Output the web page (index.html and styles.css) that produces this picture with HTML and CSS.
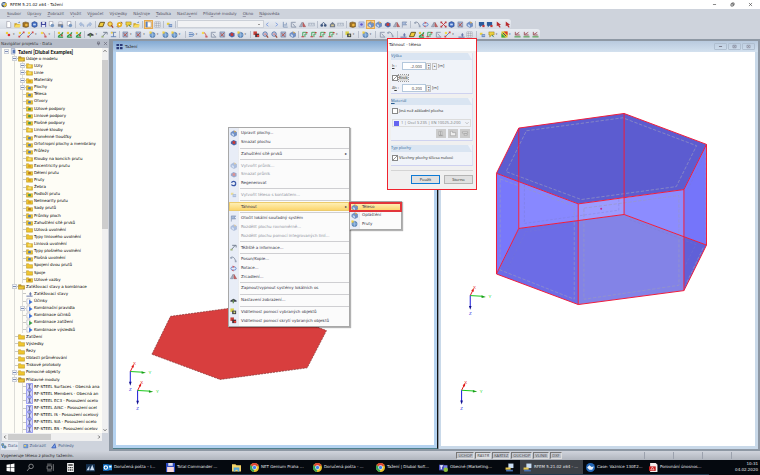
FILE: index.html
```html
<!DOCTYPE html>
<html lang="cs">
<head>
  <meta charset="UTF-8">
  <meta name="viewport" content="width=device-width, initial-scale=1.0">
  <title>RFEM 5.21.02 x64 - Tažení</title>
  <link rel="stylesheet" href="styles.css">
</head>
<body>
  <header class="titlebar">
    <svg class="icon" viewBox="0 0 16 16"><circle cx="7" cy="8" r="6" fill="#3d5570"/><path d="M4 9l6-5 4 4-5 6z" fill="#e8c23c"/><path d="M3 5h6v4H3z" fill="#9fc0e8"/></svg>
    <h1 class="titlebar__text">RFEM 5.21.02 x64 - Tažení</h1>
    <div class="titlebar__buttons">
      <button aria-label="Minimalizovat"><svg class="icon" viewBox="0 0 16 16"><path d="M3 8h10" stroke="#444" stroke-width="2"/></svg></button>
      <button aria-label="Obnovit"><svg class="icon" viewBox="0 0 16 16"><path d="M3 6h7v7H3zM6 6V3h7v7h-3" fill="none" stroke="#333" stroke-width="2"/></svg></button>
      <button aria-label="Zavřít"><svg class="icon" viewBox="0 0 16 16"><path d="M3 3l10 10M13 3L3 13" stroke="#444" stroke-width="2"/></svg></button>
    </div>
  </header>

  <nav class="menubar">
    <a href="#"><u>S</u>oubor</a>
    <a href="#">Úpr<u>a</u>vy</a>
    <a href="#"><u>Z</u>obrazit</a>
    <a href="#">V<u>l</u>ožit</a>
    <a href="#">V<u>ý</u>počet</a>
    <a href="#">Výsl<u>e</u>dky</a>
    <a href="#">Ná<u>s</u>troje</a>
    <a href="#"><u>T</u>abulka</a>
    <a href="#">Nasta<u>v</u>ení</a>
    <a href="#">Příd<u>a</u>vné moduly</a>
    <a href="#"><u>O</u>kno</a>
    <a href="#"><u>N</u>ápověda</a>
  </nav>

  <div class="toolbars">
    <div class="toolbar toolbar--main" id="toolbar_main"></div>
    <div class="toolbar toolbar--model" id="toolbar_model"></div>
  </div>

  <main class="workspace">
    <aside class="navigator">
      <div class="navigator__header">
        <span>Navigátor projektu - Data</span>
        <svg class="icon" viewBox="0 0 16 16"><path d="M5 3h6v6H5zM3 9h10M8 9v5" fill="none" stroke="#667" stroke-width="2"/></svg>
        <svg class="icon" viewBox="0 0 16 16"><path d="M3 3l10 10M13 3L3 13" stroke="#667" stroke-width="2"/></svg>
      </div>
      <div class="navigator__body">
        <ul class="tree" id="tree"></ul>
        <div class="scroll scroll--vertical">
          <svg viewBox="0 0 16 16"><path d="M4 10l4-4 4 4" fill="none" stroke="#444" stroke-width="2"/></svg>
          <div class="scroll__thumb"></div>
          <svg viewBox="0 0 16 16"><path d="M4 6l4 4 4-4" fill="none" stroke="#444" stroke-width="2"/></svg>
        </div>
      </div>
      <div class="scroll scroll--horizontal">
        <svg viewBox="0 0 16 16"><path d="M10 4L6 8l4 4" fill="none" stroke="#444" stroke-width="2"/></svg>
        <div class="scroll__thumb"></div>
        <svg viewBox="0 0 16 16"><path d="M6 4l4 4-4 4" fill="none" stroke="#444" stroke-width="2"/></svg>
      </div>
      <div class="navigator__tabs">
        <button class="tab tab--active"><svg class="icon" viewBox="0 0 16 16"><path d="M2 2h5v5H2zM8 8h5v5H8z" fill="#e8c23c" stroke="#2a6fc0" stroke-width="2"/><path d="M4 8v4h3" fill="none" stroke="#2a6fc0" stroke-width="2"/></svg>Data</button>
        <button class="tab"><svg class="icon" viewBox="0 0 16 16"><path d="M2 4h11v9H2z" fill="#6f9ede" stroke="#35559c"/><path d="M3 5h5v4H3z" fill="#f0d060"/></svg>Zobrazit</button>
        <button class="tab"><svg class="icon" viewBox="0 0 16 16"><path d="M2 13L10 2l3 11z" fill="#7fa4e8" stroke="#2b50b0" stroke-width="2"/></svg>Pohledy</button>
      </div>
    </aside>

    <div class="mdi">
      <section class="view view--active">
        <div class="view__title">
          <svg class="icon" viewBox="0 0 16 16"><path d="M1 2h6v5H1zM9 2h6v5H9zM1 9h6v5H1zM9 9h6v5H9z" fill="#2b3a78"/></svg>
          <span>Tažení</span>
        </div>
        <svg class="view__canvas" viewBox="18 -834 954 1182" preserveAspectRatio="xMinYMin meet">
          <defs>
            <g id="axes" font-family="Liberation Sans" font-size="13">
              <path d="M0 0L8-16" stroke="#e01818" stroke-width="3"/><path d="M11-22l-1 11-7-4z" fill="#e01818"/>
              <path d="M0 0l36 2" stroke="#18c818" stroke-width="3"/><path d="M47 4l-13 3v-8z" fill="#18a018"/>
              <path d="M0 0v34" stroke="#1818d8" stroke-width="3"/><path d="M0 43l-4-12h8z" fill="#101090"/>
              <text x="8" y="-19" fill="#e01818">X</text>
              <text x="55" y="8" fill="#18d818">Y</text>
              <text x="-4" y="59" fill="#1818e0">Z</text>
            </g>
          </defs>
          <path d="M126 75L182-39 446-75 651 4 593 116 331 151z" fill="#d83e3e" stroke="#803030" stroke-width="2" stroke-dasharray="6 3"/>
          <use href="#axes" x="61" y="127"/>
          <use href="#axes" x="83" y="184"/>
        </svg>
      </section>

      <section class="view">
        <div class="view__title">
          <div class="view__buttons">
            <button aria-label="Minimalizovat"><svg viewBox="0 0 16 16"><path d="M3 8h10" stroke="#778" stroke-width="3"/></svg></button>
            <button aria-label="Maximalizovat"><svg viewBox="0 0 16 16"><path d="M3 4h10v8H3zM6 8h4" fill="none" stroke="#778" stroke-width="2"/></svg></button>
            <button aria-label="Zavřít"><svg viewBox="0 0 16 16"><path d="M3 4h10v8H3zM5 5l6 6M11 5l-6 6" fill="none" stroke="#889" stroke-width="2"/></svg></button>
          </div>
        </div>
        <svg class="view__canvas" viewBox="33 -114 945 1182" preserveAspectRatio="xMinYMin meet">
          <!-- walls -->
          <path d="M200 251l67 24v142l-67 137z" fill="#7878fb"/>
          <path d="M267 275l179 68v50l-179 24z" fill="#8888ff"/>
          <path d="M446 343l138-18v50l-138 18z" fill="#9c9cff"/>
          <path d="M584 325l180-25v141l-180-66z" fill="#8c8cff"/>
          <path d="M764 300l68-136v303l-68-26z" fill="#7575fa"/>
          <!-- base -->
          <path d="M200 554l67-137 179-24v253z" fill="#6c6ce6"/>
          <path d="M446 393l138-18 180 66v163l-318 42z" fill="#8383e7"/>
          <path d="M764 441l68 26-68 137z" fill="#6060d8"/>
          <!-- top face -->
          <path d="M267 115l317-44 248 93-68 136-318 43-246-92z" fill="#5c5cd0"/>
          <g fill="none" stroke="#9898c0" stroke-width="2" stroke-dasharray="10 5">
            <path d="M290 123l290-39 222 84-61 123-286 39-226-84z"/>
            <path d="M211 268l223 82v280l-223-88z"/>
            <path d="M463 356l286-38v270l-286 42z"/>
            <path d="M830 180v278M822 475l-52 110"/>
          </g>
          <g fill="none" stroke="#7878cc" stroke-width="1" stroke-dasharray="8 5">
            <path d="M284 285v117l284-40v-34M230 545l58-118 150-20M600 390l200 75-30 60M775 300l50-100"/>
          </g>
          <g fill="none" stroke="#f01c3c" stroke-width="3">
            <path d="M267 115l317-44 248 93-68 136-318 43-246-92z"/>
            <path d="M267 417l317-42 248 92-68 137-318 42-246-92z"/>
            <path d="M267 115v302M584 71v304M446 343v303M200 251v303M764 300v304M832 164v303"/>
          </g>
          <circle cx="515" cy="358" r="3" fill="#c02890"/>
          <use href="#axes" x="121" y="619"/>
          <use href="#axes" x="95" y="904"/>
        </svg>
      </section>
    </div>
  </main>

  <footer class="statusbar">
    <span class="statusbar__hint">Vygeneruje těleso z plochy tažením.</span>
    <div class="statusbar__modes">
      <button>UCHOP</button><button class="on">RASTR</button><button>KARTEZ</button><button>OUCHOP</button><button>VLINIE</button><button>DXF</button>
    </div>
    <div class="statusbar__panes"><i></i><i></i><i></i><i></i></div>
  </footer>

  <nav class="taskbar" id="taskbar"></nav>

  <ul class="menu" id="context_menu"></ul>
  <ul class="menu menu--sub" id="sub_menu"></ul>

  <form class="dialog">
    <h2 class="dialog__title">Táhnout - těleso</h2>
    <div class="dialog__body">
      <fieldset class="group group--height">
        <legend>Výška</legend>
        <div class="field">
          <label for="height"><u>h</u> :</label>
          <input id="height" type="text" value="-2.000">
          <button type="button" class="spin" aria-label="Krok">▴<br>▾</button>
          <button type="button" class="spin" aria-label="Více">▸</button>
          <span>[m]</span>
        </div>
        <label class="check check--focus"><input type="checkbox" checked><span>Krok</span></label>
        <div class="field">
          <label for="step">Δ<u>h</u> :</label>
          <input id="step" type="text" value="0.200">
          <button type="button" class="spin" aria-label="Krok">▴<br>▾</button>
          <span>[m]</span>
        </div>
      </fieldset>
      <fieldset class="group group--material">
        <legend><u>M</u>ateriál</legend>
        <label class="check"><input type="checkbox"><span>Jiná než základní plocha</span></label>
        <div class="material">
          <i class="material__swatch"></i>
          <select aria-label="Materiál" disabled><option>1 | Ocel S 235 | EN 10025-2:200</option></select>
          <svg viewBox="0 0 16 16"><path d="M4 6l4 4 4-4" fill="none" stroke="#aaa" stroke-width="2"/></svg>
        </div>
        <div class="material__tools">
          <button type="button" aria-label="Knihovna"><svg viewBox="0 0 16 16"><path d="M3 3h3v9H3zM7 3h3v9H7zM3 13h10" fill="#eee" stroke="#888"/></svg></button>
          <button type="button" aria-label="Nový"><svg viewBox="0 0 16 16"><path d="M2 3h5v3h7v7H2z" fill="#eee" stroke="#888"/></svg></button>
          <button type="button" aria-label="Upravit"><svg viewBox="0 0 16 16"><path d="M2 4h12v3H2zM6 9h7v3H6z" fill="#eee" stroke="#888"/></svg></button>
        </div>
      </fieldset>
      <fieldset class="group group--type">
        <legend>Typ plochy</legend>
        <label class="check"><input type="checkbox" checked><span>Všechny plochy tělesa nulové</span></label>
      </fieldset>
      <div class="dialog__actions">
        <button type="submit" class="primary">Použít</button>
        <button type="button">Storno</button>
      </div>
    </div>
  </form>

  <script src="app.js"></script>
</body>
</html>
```
FILE: styles.css
```css
* {
  box-sizing: border-box;
}

body {
  margin: 0;
  height: 100vh;
  display: flex;
  flex-direction: column;
  overflow: hidden;
  font-family: "DejaVu Sans", sans-serif;
  font-size: 4px;
  line-height: 6px;
  color: #222;
  background: #ced3dc;
}

button,
input,
select {
  font: inherit;
  color: inherit;
  margin: 0;
  padding: 0;
  border: 0;
  background: none;
  border-radius: 0;
}

ul {
  list-style: none;
  margin: 0;
  padding: 0;
}

a {
  color: inherit;
  text-decoration: none;
}

svg {
  display: block;
}

.icon {
  width: 7px;
  height: 7px;
  flex: none;
}

/* Title and menu */
.titlebar {
  height: 9px;
  flex: none;
  display: flex;
  align-items: center;
  gap: 2px;
  padding: 0 7px 0 1px;
  background: #fff;
}

.titlebar__text {
  flex: 1;
  margin: 0;
  font-size: 4px;
  font-weight: 400;
  color: #111;
}

.titlebar__buttons {
  display: flex;
  gap: 13px;
}

.titlebar__buttons .icon {
  width: 5px;
  height: 5px;
}

.menubar {
  height: 10px;
  flex: none;
  display: flex;
  align-items: center;
  gap: 6px;
  padding-left: 7px;
  color: #556;
}

.menubar u {
  text-decoration-color: #99a;
}

/* Toolbars */
.toolbars {
  flex: none;
}

.toolbar {
  height: 10px;
  display: flex;
  align-items: center;
  padding-left: 4px;
  background: linear-gradient(#e9edf3, #d6dbe4);
  border-radius: 0 3px 3px 0;
}

.toolbar--main {
  width: 67.3%;
}

.toolbar--model {
  width: 71%;
}

.tool {
  flex: 10 1 0;
  height: 9px;
  min-width: 0;
  display: flex;
  align-items: center;
  justify-content: center;
}

.tool svg {
  width: 7px;
  height: 7px;
}

.tool--on {
  background: #fbd28b;
  outline: 1px solid #e5a850;
  outline-offset: -1px;
}

.toolbar__sep {
  flex: 4 1 0;
  height: 7px;
  background: linear-gradient(#b8bfcc, #b8bfcc) center / 1px 100% no-repeat;
}

.toolbar__drop {
  flex: 5 1 0;
  min-width: 0;
  font-size: 3px;
  line-height: 8px;
  color: #555;
}

.toolbar__combo {
  flex: 97 1 0;
  height: 8px;
  min-width: 0;
  appearance: none;
  background: linear-gradient(#999, #999) 97% 50% / 2px 1px no-repeat #f1f2f4;
  border: 1px solid #cbd0d8;
}

/* Workspace */
.workspace {
  flex: 1;
  min-height: 0;
  display: flex;
}

.navigator {
  width: 109px;
  flex: none;
  display: flex;
  flex-direction: column;
  background: #ced3dc;
}

.navigator__header {
  height: 9px;
  flex: none;
  display: flex;
  align-items: center;
  gap: 2px;
  padding: 0 1px;
  color: #333;
  background: #b7bdc9;
}

.navigator__header span {
  flex: 1;
}

.navigator__header .icon {
  width: 5px;
  height: 5px;
}

.navigator__body {
  flex: 1;
  min-height: 0;
  display: flex;
  margin: 0 1px 0 2px;
  background: #fefdf6;
}

.tree {
  flex: 1;
  min-width: 0;
  overflow: hidden;
  display: grid;
  grid-auto-rows: minmax(0, 1fr);
  color: #000;
}

.tree__row {
  display: flex;
  align-items: center;
  white-space: nowrap;
}

.tree__row--root {
  font-family: Lato, sans-serif;
  font-size: 5px;
  font-weight: 700;
}

.tree__row .icon {
  margin-right: 1px;
}

.tree__cell {
  width: 8px;
  flex: none;
  align-self: stretch;
  display: flex;
  align-items: center;
  justify-content: center;
}

.tree__cell--line {
  background: linear-gradient(#dcdcd8, #dcdcd8) 4px 0 / 1px 100% no-repeat;
}

.tree__cell--node {
  background:
    linear-gradient(#dcdcd8, #dcdcd8) 4px 0 / 1px 100% no-repeat,
    linear-gradient(#c8c8c4, #c8c8c4) 4px 50% / 4px 1px no-repeat;
}

.tree__toggle {
  width: 5px;
  height: 5px;
  background: linear-gradient(#7c8cb4, #7c8cb4) center / 3px 1px no-repeat #f4f6fa;
  border: 1px solid #ccd0d8;
}

.scroll {
  display: flex;
  flex: none;
  background: #f0f0f0;
}

.scroll svg {
  width: 6px;
  height: 6px;
  flex: none;
}

.scroll--vertical {
  width: 6px;
  flex-direction: column;
}

.scroll--vertical .scroll__thumb {
  height: 44%;
  margin-top: 6px;
  background: #cdcdcd;
}

.scroll--vertical svg:last-child {
  margin-top: auto;
}

.scroll--horizontal {
  height: 8px;
  margin: 0 7px 0 2px;
  align-items: center;
}

.scroll--horizontal .scroll__thumb {
  width: 43%;
  height: 6px;
  background: #cdcdcd;
}

.scroll--horizontal svg:last-child {
  margin-left: auto;
}

.navigator__tabs {
  height: 10px;
  flex: none;
  display: flex;
  align-items: center;
  gap: 5px;
  padding-left: 1px;
  color: #4a6088;
}

.tab {
  display: flex;
  align-items: center;
  gap: 1px;
  height: 8px;
}

.tab .icon {
  width: 6px;
  height: 6px;
}

.tab--active {
  background: #e4e8ef;
}

/* Model windows */
.mdi {
  flex: 1;
  min-width: 0;
  display: flex;
  gap: 1px;
  padding: 2px 2px 2px 4px;
  background: #8e98a4;
}

.view {
  flex: 320 1 0;
  min-width: 0;
  display: flex;
  flex-direction: column;
  padding: 0 3px 3px 2px;
  background: #c9d9e9;
}

.view--active {
  flex-grow: 324;
  padding-left: 3px;
  background: #b4d2f0;
  border-right: 1px solid #111;
  border-bottom: 1px solid #4d7f8c;
}

.view__title {
  height: 11px;
  flex: none;
  display: flex;
  align-items: center;
  gap: 2px;
  margin: 0 -3px;
  padding: 0 3px;
  background: linear-gradient(#b9cade, #d3e1ef);
}

.view--active .view__title {
  background: linear-gradient(#84a9d2, #b6d0ea);
}

.view__canvas {
  flex: 1;
  min-height: 0;
  width: 100%;
  background: #fff;
}

.view__buttons {
  margin-left: auto;
  display: flex;
  gap: 1px;
}

.view__buttons button {
  width: 13px;
  height: 7px;
  display: flex;
  align-items: center;
  justify-content: center;
  border: 1px solid #b0bfd0;
  border-radius: 1px;
}

.view__buttons svg {
  width: 5px;
  height: 5px;
}

/* Status bar */
.statusbar {
  height: 9px;
  flex: none;
  display: flex;
  align-items: center;
  padding-left: 1px;
  background: linear-gradient(#d0d4dc, #b0b5be);
}

.statusbar__hint {
  width: 60%;
}

.statusbar__modes {
  display: flex;
  gap: 1px;
  font-family: "Open Sans", sans-serif;
  font-size: 4px;
  color: #444;
}

.statusbar__modes button {
  height: 7px;
  padding: 0 1px;
  border: 1px solid;
  border-color: #777 #ddd #ddd #777;
  line-height: 5px;
}

.statusbar__modes .on {
  background: #d8dbe0;
}

.statusbar__panes {
  flex: 1;
  display: flex;
  justify-content: flex-end;
}

.statusbar__panes i {
  width: 29px;
  height: 7px;
  border-left: 1px solid #9ba1ad;
}

/* Windows task bar */
.taskbar {
  height: 15px;
  flex: none;
  display: flex;
  color: #e4e6e8;
  background: #05090f;
}

.app {
  width: 63px;
  flex: none;
  display: flex;
  align-items: center;
  gap: 2px;
  padding-left: 3px;
  white-space: nowrap;
  border-bottom: 1px solid #20394d;
}

.app svg {
  width: 9px;
  height: 9px;
  flex: none;
}

.app--pinned {
  width: 20px;
  padding: 0;
  justify-content: center;
  border-bottom: 0;
}

.app--running {
  width: 21px;
  padding: 0;
  justify-content: center;
}

.app--active {
  background: #3c4046;
}

.clock {
  margin-left: auto;
  padding: 1px 2px 0 0;
  text-align: right;
}

/* Menus lie over the model windows */
.menu {
  position: absolute;
  left: 228px;
  top: 127px;
  width: 122px;
  height: 200px;
  padding: 1px 0;
  display: flex;
  flex-direction: column;
  border: 1px solid #a8a8a8;
  color: #334;
  background: linear-gradient(90deg, #e8edf7 9px, #d8dce4 9px, #fbfbfb 10px);
  box-shadow: 1px 1px 1px rgba(0, 0, 0, .3);
}

.menu__item {
  flex: 3 1 0;
  min-height: 0;
}

.menu__item button {
  width: 100%;
  height: 100%;
  display: flex;
  align-items: center;
  gap: 4px;
  padding: 0 2px 0 1px;
  text-align: left;
  white-space: nowrap;
}

.menu__item span {
  flex: 1;
}

.menu__item button:disabled {
  color: #9094a0;
}

.menu__item button:disabled svg {
  opacity: .5;
}

.menu__item--open {
  background: linear-gradient(#fff2bd, #fbd264);
  outline: 1px solid #eccb6c;
  outline-offset: -1px;
}

.menu__sep {
  flex: 1 1 0;
  margin-left: 11px;
  background: linear-gradient(#cfcfd2, #cfcfd2) center / 100% 1px no-repeat;
}

.menu--sub {
  left: 349px;
  top: 201px;
  width: 53px;
  height: 29px;
}

.menu--sub .menu__item--open {
  outline: 2px solid #e2353a;
}

/* Dialog */
.dialog {
  position: absolute;
  left: 387px;
  top: 38px;
  width: 90px;
  font-family: "Open Sans", sans-serif;
  font-size: 4px;
  border: 1px solid #f0232e;
  background: #f0f0f0;
}

.dialog__title {
  height: 12px;
  margin: 0;
  padding-left: 1px;
  font-family: "DejaVu Sans", sans-serif;
  font-size: 4px;
  font-weight: 400;
  line-height: 11px;
  background: #fff;
}

.dialog__body {
  padding: 2px 3px 5px;
}

.group {
  margin: 0 0 4px;
  padding: 0 1px;
  min-width: 0;
  border: 0;
  border-bottom: 1px solid #cfd2f0;
  border-right: 1px solid #dcdff4;
  background: #f0f3f9;
}

.group legend {
  float: left;
  width: calc(100% + 2px);
  height: 7px;
  margin: 0 -1px 2px;
  padding: 0;
  color: #2d5f94;
  background: #dae5f2;
  clip-path: polygon(0 0, 95% 0, 100% 100%, 0 100%);
}

.group > :not(legend) {
  clear: both;
}

.group--height {
  height: 41px;
}

.group--material {
  height: 43px;
}

.group--type {
  height: 21px;
}

.field {
  height: 8px;
  display: flex;
  align-items: center;
  color: #333;
}

.field label {
  width: 10px;
}

.field input {
  width: 24px;
  height: 8px;
  padding-right: 3px;
  text-align: right;
  background: #fff;
  border: 1px solid #b4c8dc;
}

.spin {
  width: 5px;
  height: 7px;
  margin-right: 1px;
  font-size: 3px;
  line-height: 3px;
  text-align: center;
  border: 1px solid #c4c4c4;
}

.check {
  height: 8px;
  display: flex;
  align-items: center;
  gap: 1px;
}

.group--height .check {
  margin: 4px 0 2px;
}

.check input {
  appearance: none;
  width: 6px;
  height: 6px;
  background: #fff;
  border: 1px solid #888;
}

.check input:checked {
  background: linear-gradient(135deg, #fff 50%, #999 50%, #999 60%, #fff 60%);
}

.check--focus span {
  background: #dcdcdc;
  outline: 1px dotted #999;
}

.material {
  height: 8px;
  display: flex;
  align-items: center;
  gap: 2px;
  margin: 4px 0 2px;
  color: #777;
  border: 1px solid #dcdcdc;
}

.material__swatch {
  width: 5px;
  height: 5px;
  margin-left: 1px;
  background: #6464f0;
}

.material select {
  flex: 1;
  min-width: 0;
  appearance: none;
  opacity: 1;
}

.material svg {
  width: 6px;
  height: 6px;
}

.material__tools {
  display: flex;
  justify-content: flex-end;
  gap: 2px;
  padding-right: 1px;
}

.material__tools button {
  width: 10px;
  height: 9px;
  padding: 1px;
  background: #ccc;
}

.material__tools svg {
  width: 8px;
  height: 7px;
}

.dialog__actions {
  display: flex;
  justify-content: flex-end;
  gap: 4px;
  padding-top: 4px;
  border-top: 1px solid #d4d4d4;
}

.dialog__actions button {
  width: 29px;
  height: 9px;
  line-height: 6px;
  border: 1px solid #b4b4b4;
  background: #e1e1e1;
}

.dialog__actions .primary {
  border-color: #0f7ad4;
}
```
FILE: app.js
```js
const glyphs = {
  doc: '<path d="M4 1h6l3 3v11H4z" fill="#fff" stroke="#778"/>',
  folder: '<path d="M1 4h5l2 2h7v8H1z" fill="#efc52e" stroke="#a8861c"/>',
  open: '<path d="M1 4h6l1 2h7v8H1z" fill="#c89c20" stroke="#907010"/><path d="M3 8h11l-2 5H1z" fill="#e8c438"/>',
  openFile: '<path d="M1 5h5l2 2h5v7H1z" fill="#c89c20"/><path d="M4 8h12l-3 6H1z" fill="#f8dc60"/><path d="M9 4l4-3v3z" fill="#2a60b0"/>',
  book: '<path d="M2 4l6-2 7 2v9l-6 2-7-2z" fill="#a07428" stroke="#5c4010"/><circle cx="10" cy="9" r="3" fill="#f0b840"/>',
  cube: '<path d="M2 4l6-3 6 3v8l-6 3-6-3z" fill="#3c68c0" stroke="#203870"/><path d="M5 6h6v4H5z" fill="#c8daf4"/>',
  save: '<path d="M2 2h12v12H2z" fill="#40489c"/><path d="M5 2h6v5H5zM4 9h8v5H4z" fill="#e8eaf6"/>',
  page: '<path d="M3 1h8v10H3z" fill="#fff" stroke="#778"/><circle cx="10" cy="10" r="4" fill="#7898c0"/>',
  print: '<path d="M4 2h8v5H4z" fill="#fff" stroke="#889"/><path d="M2 7h12v6H2z" fill="#8a8f98"/><path d="M9 10h5v5H9z" fill="#5078b8"/>',
  undo: '<path d="M3 7l4-4v3c5 0 7 3 6 7-1-3-3-4-6-4v3z" fill="#b4c8e4" stroke="#7f98c0"/>',
  redo: '<path d="M13 7L9 3v3c-5 0-7 3-6 7 1-3 3-4 6-4v3z" fill="#b4c8e4" stroke="#7f98c0"/>',
  plate: '<path d="M5 3h10l-4 10H1z" fill="#f0cc40" stroke="#604810" stroke-width="2"/>',
  lens: '<circle cx="7" cy="7" r="5" fill="#f6d850" stroke="#b87818" stroke-width="2"/><path d="M10 10l4 5" stroke="#a04020" stroke-width="3"/>',
  zoom: '<circle cx="7" cy="7" r="5" fill="#d8e4f4" stroke="#4c68a0" stroke-width="2"/><path d="M5 7h5" stroke="#c84040" stroke-width="2"/><path d="M10 10l4 5" stroke="#a05040" stroke-width="3"/>',
  gear: '<circle cx="8" cy="8" r="6" fill="#e8b020"/><circle cx="8" cy="8" r="2" fill="#fff"/><path d="M11 2l4 3M2 12l3 3" stroke="#805020" stroke-width="2"/>',
  chat: '<path d="M2 2h12v7H8l-4 5V9H2z" fill="#ecd03c" stroke="#8c7010"/><path d="M9 9l4 5" stroke="#3c8040" stroke-width="2"/>',
  panel: '<path d="M2 2h12v12H2z" fill="#fff" stroke="#807060"/><path d="M2 2h4v12H2z" fill="#5a80c0"/>',
  table: '<path d="M2 2h12v12H2z" fill="#fff" stroke="#7b8494"/><path d="M2 6h12M2 10h12M6 2v12M10 2v12" stroke="#7b8494"/>',
  tag: '<path d="M2 4h6v5H2z" fill="#e8cf40"/><path d="M6 7h8v7H6z" fill="#6f8fc4"/><path d="M8 10h5" stroke="#fff"/>',
  prev: '<path d="M10 4L5 8l5 4" fill="none" stroke="#7c9ce0" stroke-width="2"/>',
  next: '<path d="M6 4l5 4-5 4" fill="none" stroke="#7c9ce0" stroke-width="2"/>',
  support: '<path d="M3 2v12h10M3 9h7V4" fill="none" stroke="#8097b8" stroke-width="2"/><path d="M8 6l5 3-5 3z" fill="#a8b8d0"/>',
  frame: '<path d="M3 14V3h10M6 6l7 8M3 14h11" fill="none" stroke="#8894a8" stroke-width="2"/>',
  ruler: '<path d="M1 5h14v6H1z" fill="#dde3ea" stroke="#8894a8"/><path d="M4 5v4M8 5v4M12 5v4" stroke="#8894a8"/>',
  glasses: '<circle cx="4" cy="10" r="3" fill="#405880"/><circle cx="12" cy="10" r="3" fill="#405880"/><path d="M4 7l4-4 4 4" fill="none" stroke="#405880" stroke-width="2"/>',
  house: '<path d="M2 8l6-6 6 6v6H2z" fill="#707a8c"/><path d="M5 8h6v4H5z" fill="#d8c890"/>',
  target: '<path d="M2 2h12v12H2z" fill="#c4ccf0" stroke="#7480b8"/><circle cx="8" cy="8" r="3" fill="#6058c8"/>',
  solid: '<path d="M2 6l6-4 7 3v7l-6 3-7-4z" fill="#6f90c8" stroke="#4c6aa0"/><path d="M4 7l5 2v5l-5-3z" fill="#c4d6f0"/><path d="M9 1l5 2-3 4z" fill="#d8a850"/>',
  solidRed: '<path d="M2 6l6-4 7 3v7l-6 3-7-4z" fill="#4a68a8"/><path d="M6 5h6v6H6z" fill="#d03830"/>',
  flag: '<path d="M3 15V2h10l-3 4 3 3H4" fill="#a8bcdc" stroke="#5a6c90"/>',
  copy: '<path d="M1 4c6-4 10 0 12 9" fill="none" stroke="#7c8698" stroke-width="2"/><path d="M1 2h4v4H1zM11 10h4v4h-4z" fill="#98a4b8"/>',
  rotate: '<ellipse cx="8" cy="8" rx="6" ry="4" fill="none" stroke="#5c84d0" stroke-width="2"/><path d="M6 1l5 3-5 3zM8 10l-4 2 4 3z" fill="#d05858"/>',
  mirror: '<path d="M1 13l6-10v10z" fill="#b4bccc" stroke="#606c84"/><path d="M15 13L9 3v10z" fill="#d86868" stroke="#803838"/>',
  cross: '<path d="M3 3l10 10M13 3L3 13" stroke="#c83038" stroke-width="2"/><path d="M1 1h4v4H1zM11 1h4v4h-4zM1 11h4v4H1zM11 11h4v4h-4z" fill="#b83840"/>',
  info: '<path d="M2 2h12v9H8l-4 4V11H2z" fill="#2c5c9c"/><path d="M10 9h5v5h-5z" fill="#c03838"/>',
  pointer: '<path d="M4 1v11l3-2 3 5 3-1-3-5h4z" fill="#b82c30"/>',
  node: '<circle cx="9" cy="9" r="3" fill="#d83030"/><path d="M2 2h5v5H2z" fill="#f0d040"/>',
  line: '<path d="M3 13L13 3" stroke="#607cae" stroke-width="2"/><path d="M1 11h4v4H1zM11 1h4v4h-4z" fill="#d04848"/><path d="M2 2h5v5H2z" fill="#f0d850"/>',
  member: '<path d="M3 4c5-2 8 2 9 9" fill="none" stroke="#c84040" stroke-width="2"/><path d="M10 11h5v4h-5z" fill="#d06060"/><path d="M2 2h5v5H2z" fill="#f0d850"/>',
  green: '<path d="M3 14c0-7 10-3 10-11M3 14h11" fill="none" stroke="#2c9848" stroke-width="3"/><path d="M2 2h5v5H2z" fill="#e4c83c"/><path d="M9 8h4v4H9z" fill="#c04838"/>',
  dark: '<path d="M1 8l7-4 7 4v3H1z" fill="#3f4450"/><path d="M6 6h3v8H6z" fill="#688c50"/>',
  load: '<path d="M3 13l9-10M5 3h9v5" fill="none" stroke="#6a7688" stroke-width="2"/><path d="M1 11h5v4H1z" fill="#a0b47c"/>',
  section: '<path d="M2 3h12M2 13h12M8 3v10" stroke="#6480b0" stroke-width="2"/><path d="M2 2h4v4H2z" fill="#eccc48"/>',
  mesh: '<path d="M2 2h11v12H2z" fill="#a4b4cc" stroke="#5f749c"/><path d="M4 12L12 4M4 5l7 8" stroke="#b85048" stroke-width="2"/>',
  sphere: '<circle cx="8" cy="9" r="6" fill="#6a98cc" stroke="#385c8c"/><path d="M8 3v12M2 9h12" stroke="#bcd4ec"/><path d="M1 1h5v5H1z" fill="#f0d040"/>',
  ibeam: '<path d="M2 4h6c7 0 7 8 0 8H2M2 8h10" fill="none" stroke="#5a82bc" stroke-width="2"/>',
  axesG: '<path d="M4 3v10M4 3h9M9 7v7M9 7h5" fill="none" stroke="#38a050" stroke-width="2"/><path d="M1 12h6v2H1zM11 2h4v3h-4z" fill="#c04040"/>',
  spectrum: '<path d="M1 1h14v14H1z" fill="#e8d030"/><path d="M1 5l10 10H1z" fill="#38a848"/><path d="M6 1h9v9z" fill="#d83830"/><path d="M4 4l8 8" stroke="#203080" stroke-width="2"/>',
  graph: '<path d="M1 11h14v4H1z" fill="#78b078"/><path d="M3 2v7h10M4 8l8-5" fill="none" stroke="#9c4c54" stroke-width="2"/>',
  root: '<path d="M3 1h8v13H3z" fill="#dfe6f4" stroke="#6878a0"/><path d="M6 4h6v8H6z" fill="#5878b8"/>',
  arrowBox: '<path d="M2 2h7v12H2z" fill="#fff" stroke="#889"/><path d="M7 4l8 5-8 5z" fill="#3c70d8"/>',
  arrowGreen: '<path d="M2 2h7v12H2z" fill="#fff" stroke="#889"/><path d="M7 4l8 5-8 5z" fill="#38a048"/>',
  loadCase: '<path d="M1 14h14M10 5v8M7 9h6" fill="none" stroke="#5868a0" stroke-width="2"/>',
  steel: '<path d="M1 1h14v14H1z" fill="#d5d6fb" stroke="#8c90ee" stroke-width="2"/><path d="M5 4h6M5 12h6M8 4v8" stroke="#5c6490" stroke-width="2"/>',
  visible: '<path d="M1 1h8v8H1z" fill="#d8d048"/><path d="M5 6h9v8H5z" fill="#383c44"/><path d="M8 8h4v4H8z" fill="#d8dc80"/>',
  hidden: '<path d="M1 1h8v8H1z" fill="#c84038"/><path d="M5 6h9v8H5z" fill="#4c3038"/><path d="M9 9h5v4H9z" fill="#f04038"/>',
  refresh: '<circle cx="8" cy="8" r="5" fill="none" stroke="#3858a8" stroke-width="3" stroke-dasharray="12 4"/>'
};

// tinted folder used by most of the model data rows
const tints = ['#d8a020', '#4a78b8', '#3c9058', '#f4dc70', '#b07820'];
tints.forEach((tint, i) => {
  glyphs['f' + i] = glyphs.folder + `<path d="M5 7h6v5H5z" fill="${tint}"/>`;
});

const taskGlyphs = {
  start: '<path d="M1 3l6-1v6H1zM8 2l7-1v7H8zM1 9h6v6l-6-1zM8 9h7v7l-7-1z" fill="#fff"/>',
  search: '<circle cx="9" cy="6" r="4" fill="none" stroke="#ddd" stroke-width="1"/><path d="M6 9l-4 5" stroke="#ddd"/>',
  taskview: '<path d="M2 5h8v6H2zM2 2h8M2 14h8M13 2v12" fill="none" stroke="#ccc"/>',
  calc: '<path d="M2 0h12v16H2z" fill="#f4f4f4"/><path d="M4 2h8v3H4zM4 7h2v2H4zM7 7h2v2H7zM10 7h2v2h-2zM4 10h2v2H4zM7 10h2v2H7zM10 10h2v2h-2zM4 13h2v1H4zM7 13h2v1H7zM10 13h2v1h-2z" fill="#333"/>',
  vis: '<path d="M0 2h16v13H0z" fill="#15304f"/><path d="M1 13l5-8v8zM7 13l4-10 4 10z" fill="#c8daee"/>',
  outlook: '<path d="M6 3h10v10H6z" fill="#2a90e0"/><path d="M0 2h10v12H0z" fill="#0a64b8"/><circle cx="5" cy="8" r="3" fill="none" stroke="#fff" stroke-width="2"/><path d="M11 5h4v3h-4z" fill="#fff"/>',
  floppy: '<path d="M0 0h16v16H0z" fill="#2848c0"/><path d="M4 0h8v5H4z" fill="#dde"/><path d="M2 7h12v9H2z" fill="#f6d8dc"/>',
  explorer: '<path d="M0 2h6l2 2h8v11H0z" fill="#f4d468"/><path d="M3 8h10v7h-3v-3H6v3H3z" fill="#58a8dc"/>',
  chrome: '<circle cx="8" cy="8" r="8" fill="#e8c22c"/><path d="M8 8L1 4a8 8 0 0 1 14 0z" fill="#dc4434"/><path d="M8 8L1 4a8 8 0 0 0 6 12z" fill="#38a454"/><circle cx="8" cy="8" r="4" fill="#fff"/><circle cx="8" cy="8" r="3" fill="#4484ec"/>',
  teams: '<path d="M6 4h9v9H6z" fill="#7b83eb"/><path d="M0 3h9v10H0z" fill="#4b53bc"/><path d="M2 5h5M4 5v6" stroke="#fff" stroke-width="2"/><circle cx="12" cy="12" r="4" fill="#8cc03c"/>',
  monitor: '<path d="M6 1h9v8H6z" fill="#c8dcf4"/><path d="M1 8h9v4H1z" fill="#e8c850"/><path d="M2 12h12v3H2z" fill="#4870b0"/>',
  case: '<circle cx="8" cy="8" r="8" fill="#2468b8"/><path d="M2 8l4-4 4 3 4-1-3 6H6z" fill="#eaf2fa"/>',
  pdf: '<path d="M2 0h10l3 3v13H2z" fill="#f4eeee"/><path d="M0 6h12v8H0z" fill="#c82020"/><path d="M3 12l3-5 3 5z" fill="none" stroke="#fff"/>'
};

function svg(name, cls = '') {
  return `<svg class="${cls}" viewBox="0 0 16 16">${glyphs[name] || taskGlyphs[name] || ''}</svg>`;
}

const mainTools = 'doc openFile book cube save page print page | undo redo | plate lens gear chat openFile | *panel table | tag | # prev next support frame mirror ruler | glasses house ruler | book target *solid solid solidRed mirror flag | copy rotate mirror cross cube mesh solid | info info pointer pointer';
const modelTools = 'node v line line v member v | green green green | dark v load section | mesh v mesh v sphere v sphere sphere v | ibeam v member frame mesh solidRed sphere v | hidden zoom zoom mesh solid | axesG axesG axesG axesG v | visible v | sphere v | frame copy | loadCase plate green axesG frame line v loadCase table | tag chat v spectrum v graph graph graph';

function renderToolbar(id, spec) {
  document.getElementById(id).innerHTML = spec.split(' ').map(key => {
    if (key === '|') return '<span class="toolbar__sep"></span>';
    if (key === 'v') return '<span class="toolbar__drop">▾</span>';
    if (key === '#') return '<select class="toolbar__combo" aria-label="Zatěžovací stav"></select>';
    const name = key.replace('*', '');
    return `<button class="tool${key[0] === '*' ? ' tool--on' : ''}" aria-label="${name}">${svg(name)}</button>`;
  }).join('');
}

// [level, toggle, icon, label]
const treeRows = [
  [0, 1, 'root', 'Tažení [Dlubal Examples]'],
  [1, 1, 'open', 'Údaje o modelu'],
  [2, 1, 'f3', 'Uzly'],
  [2, 1, 'f3', 'Linie'],
  [2, 1, 'f0', 'Materiály'],
  [2, 1, 'f1', 'Plochy'],
  [2, 0, 'f1', 'Tělesa'],
  [2, 0, 'f1', 'Otvory'],
  [2, 0, 'f2', 'Uzlové podpory'],
  [2, 0, 'f2', 'Liniové podpory'],
  [2, 0, 'f2', 'Plošné podpory'],
  [2, 0, 'f3', 'Liniové klouby'],
  [2, 0, 'f1', 'Proměnné tloušťky'],
  [2, 0, 'f1', 'Ortotropní plochy a membrány'],
  [2, 0, 'f1', 'Průřezy'],
  [2, 0, 'f3', 'Klouby na koncích prutu'],
  [2, 0, 'f0', 'Excentricity prutu'],
  [2, 0, 'f4', 'Dělení prutu'],
  [2, 0, 'f0', 'Pruty'],
  [2, 0, 'f3', 'Žebra'],
  [2, 0, 'f2', 'Podloží prutu'],
  [2, 0, 'f0', 'Nelinearity prutu'],
  [2, 0, 'f4', 'Sady prutů'],
  [2, 0, 'f1', 'Průniky ploch'],
  [2, 0, 'f1', 'Zahuštění sítě prvků'],
  [2, 0, 'folder', 'Uzlová uvolnění'],
  [2, 0, 'folder', 'Typy liniového uvolnění'],
  [2, 0, 'f3', 'Liniová uvolnění'],
  [2, 0, 'f1', 'Typy plošného uvolnění'],
  [2, 0, 'f1', 'Plošná uvolnění'],
  [2, 0, 'folder', 'Spojení dvou prutů'],
  [2, 0, 'folder', 'Spoje'],
  [2, 0, 'f4', 'Uzlové vazby'],
  [1, 1, 'open', 'Zatěžovací stavy a kombinace'],
  [2, 0, 'loadCase', 'Zatěžovací stavy'],
  [2, 0, 'arrowBox', 'Účinky'],
  [2, 1, 'arrowBox', 'Kombinační pravidla'],
  [2, 0, 'arrowBox', 'Kombinace účinků'],
  [2, 0, 'arrowGreen', 'Kombinace zatížení'],
  [2, 0, 'arrowBox', 'Kombinace výsledků'],
  [1, 0, 'folder', 'Zatížení'],
  [1, 0, 'folder', 'Výsledky'],
  [1, 0, 'folder', 'Řezy'],
  [1, 0, 'folder', 'Oblasti průměrování'],
  [1, 0, 'folder', 'Tiskové protokoly'],
  [1, 1, 'folder', 'Pomocné objekty'],
  [1, 1, 'open', 'Přídavné moduly'],
  [2, 0, 'steel', 'RF-STEEL Surfaces - Obecná ana'],
  [2, 0, 'steel', 'RF-STEEL Members - Obecná an'],
  [2, 0, 'steel', 'RF-STEEL EC3 - Posouzení ocelo'],
  [2, 0, 'steel', 'RF-STEEL AISC - Posouzení ocel'],
  [2, 0, 'steel', 'RF-STEEL IS - Posouzení ocelový'],
  [2, 0, 'steel', 'RF-STEEL SIA - Posouzení ocelo'],
  [2, 0, 'steel', 'RF-STEEL BS - Posouzení ocelov']
];

document.getElementById('tree').innerHTML = treeRows.map(([level, toggle, icon, label]) => {
  let cells = '';
  if (level > 0) cells += '<span class="tree__cell"></span>';
  if (level > 1) cells += '<span class="tree__cell tree__cell--line"></span>';
  cells += `<span class="tree__cell${level ? ' tree__cell--node' : ''}">${toggle ? '<i class="tree__toggle"></i>' : ''}</span>`;
  return `<li class="tree__row${level ? '' : ' tree__row--root'}">${cells}${svg(icon, 'icon')}<span>${label}</span></li>`;
}).join('');

// [icon, label, state]
const contextItems = [
  ['solid', 'Upravit plochy...'],
  ['solidRed', 'Smazat plochu'],
  null,
  ['', 'Zahuštění sítě prvků', 'sub'],
  null,
  ['solid', 'Vytvořit průnik...', 'off'],
  ['solidRed', 'Smazat průnik', 'off'],
  ['refresh', 'Regenerovat'],
  null,
  ['tag', 'Vytvořit těleso s kontaktem...', 'off'],
  null,
  ['', 'Táhnout', 'open'],
  null,
  ['flag', 'Otočit lokální souřadný systém'],
  ['solid', 'Rozdělit plochu rovnoměrně...', 'off'],
  ['', 'Rozdělit plochu pomocí integrovaných linií...', 'off'],
  null,
  ['load', 'Těžiště a informace...'],
  null,
  ['copy', 'Posun/Kopie...'],
  ['rotate', 'Rotace...'],
  ['mirror', 'Zrcadlení...'],
  null,
  ['', 'Zapnout/vypnout systémy lokálních os'],
  null,
  ['dark', 'Nastavení zobrazení...'],
  null,
  ['visible', 'Viditelnost pomocí vybraných objektů'],
  ['hidden', 'Viditelnost pomocí skrytí vybraných objektů']
];
const subItems = [
  ['solid', 'Těleso', 'picked'],
  ['solid', 'Opláštění'],
  ['sphere', 'Pruty']
];

function renderMenu(id, items) {
  document.getElementById(id).innerHTML = items.map(item => {
    if (!item) return '<li class="menu__sep"></li>';
    const [icon, label, state] = item;
    const open = state === 'open' || state === 'picked';
    const arrow = state === 'open' || state === 'sub' ? '▸' : '';
    return `<li class="menu__item${open ? ' menu__item--open' : ''}"><button${state === 'off' ? ' disabled' : ''}>${svg(icon, 'icon')}<span>${label}</span>${arrow}</button></li>`;
  }).join('');
}

// [icon, label, modifier]
const apps = [
  ['start', '', 'pinned'],
  ['search', '', 'pinned'],
  ['taskview', '', 'pinned'],
  ['calc', '', 'pinned'],
  ['vis', '', 'pinned'],
  ['outlook', 'Doručená pošta – i...'],
  ['floppy', 'Total Commander ...'],
  ['explorer', '', 'running'],
  ['chrome', 'NET Genium Praha ...'],
  ['chrome', 'Doručená pošta - ...'],
  ['chrome', 'Tažení | Dlubal Soft...'],
  ['teams', 'Obecné (Marketing...'],
  ['monitor', '', 'running'],
  ['monitor', 'RFEM 5.21.02 x64 - ...', 'active'],
  ['case', 'Case: Vaznice 130E2...'],
  ['pdf', 'Porovnání únosnos...']
];

document.getElementById('taskbar').innerHTML = apps.map(([icon, label, mod]) =>
  `<button class="app${mod ? ' app--' + mod : ''}" aria-label="${label || icon}">${svg(icon)}${label}</button>`
).join('') + '<time class="clock">10:31<br>04.02.2020</time>';

renderToolbar('toolbar_main', mainTools);
renderToolbar('toolbar_model', modelTools);
renderMenu('context_menu', contextItems);
renderMenu('sub_menu', subItems);
```
